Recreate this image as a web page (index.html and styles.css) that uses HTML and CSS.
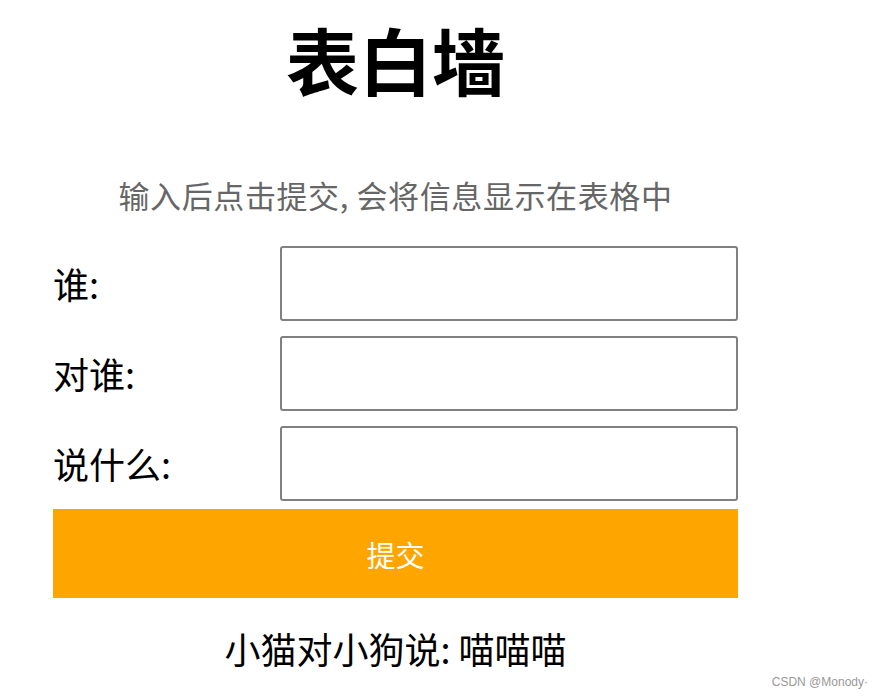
FILE: index.html
```html
<!DOCTYPE html>
<html lang="zh-CN">
<head>
<meta charset="utf-8">
<title>表白墙</title>
<link rel="stylesheet" href="styles.css">
</head>
<body>
<div class="wall">
  <h1 class="title">表白墙</h1>
  <p class="hint">输入后点击提交, 会将信息显示在表格中</p>
  <div class="row">
    <span class="label">谁:</span>
    <input class="field" type="text">
  </div>
  <div class="row">
    <span class="label">对谁:</span>
    <input class="field" type="text">
  </div>
  <div class="row">
    <span class="label">说什么:</span>
    <input class="field" type="text">
  </div>
  <button class="submit">提交</button>
  <div class="message">小猫对小狗说: 喵喵喵</div>
</div>
<div class="watermark">CSDN @Monody·</div>
</body>
</html>
```
FILE: styles.css
```css
html, body {
  margin: 0;
  padding: 0;
  background: #ffffff;
}
body {
  font-family: "Noto Sans CJK SC", "Noto Sans", sans-serif;
  color: #000;
  width: 882px;
  height: 696px;
  position: relative;
  overflow: hidden;
}
.wall {
  width: 685px;
  margin-left: 53px;
  padding-top: 8px;
  display: flex;
  flex-direction: column;
}
.title {
  margin: 0;
  font-size: 73px;
  font-weight: 700;
  line-height: 100px;
  text-align: center;
  height: 100px;
}
.hint {
  margin: 67px 0 0 0;
  font-size: 31px;
  letter-spacing: 0.6px;
  line-height: 40px;
  height: 40px;
  color: #666666;
  text-align: center;
}
.row {
  display: flex;
  align-items: center;
  height: 75px;
  margin-top: 15px;
}
.hint + .row {
  margin-top: 31px;
}
.label {
  width: 227px;
  font-size: 36px;
  line-height: 75px;
  color: #000;
}
.field {
  box-sizing: border-box;
  width: 458px;
  height: 75px;
  border: 2px solid #808080;
  border-radius: 3px;
  margin: 0;
  padding: 0 8px;
  background: #fff;
  font-size: 24px;
}
.submit {
  margin-top: 8px;
  width: 685px;
  height: 89px;
  border: none;
  background: #ffa500;
  color: #ffffff;
  font-family: "Noto Sans CJK SC", sans-serif;
  font-size: 29px;
  padding: 0;
}
.message {
  margin-top: 25px;
  font-size: 36px;
  line-height: 50px;
  text-align: center;
  color: #000;
}
.watermark {
  position: absolute;
  right: 14px;
  bottom: 7px;
  font-family: "Liberation Sans", Arial, sans-serif;
  font-size: 12px;
  color: #999999;
}
```
